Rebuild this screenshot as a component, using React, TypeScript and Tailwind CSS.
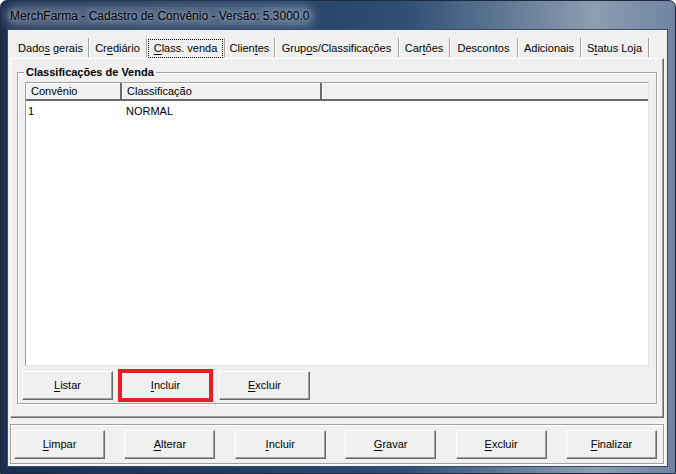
import React from "react"

const tabs = [
  { label: "Dados gerais", u: 4, w: 76 },
  { label: "Crediário", u: 2, w: 58 },
  { label: "Class. venda", u: 0, w: 78, active: true },
  { label: "Clientes", u: 5, w: 50 },
  { label: "Grupos/Classificações", u: 4, w: 124 },
  { label: "Cartões", u: 3, w: 51 },
  { label: "Descontos", u: -1, w: 68 },
  { label: "Adicionais", u: -1, w: 63 },
  { label: "Status Loja", u: 1, w: 68 },
]

const bottomButtons = [
  { label: "Limpar", u: 0 },
  { label: "Alterar", u: 0 },
  { label: "Incluir", u: 0 },
  { label: "Gravar", u: 0 },
  { label: "Excluir", u: 0 },
  { label: "Finalizar", u: 0 },
]

function Mnemonic({ text, u }: { text: string; u: number }) {
  if (u < 0) return <>{text}</>
  return (
    <>
      {text.slice(0, u)}
      <span className="underline underline-offset-[2px]">{text[u]}</span>
      {text.slice(u + 1)}
    </>
  )
}

function Button({ label, u, className = "" }: { label: string; u: number; className?: string }) {
  return (
    <button
      className={
        "h-[29px] w-[91px] bg-[#f0f0f0] text-black border border-t-white border-l-white border-r-[#696969] border-b-[#696969] shadow-[inset_-1px_-1px_0_#a0a0a0] " +
        className
      }
    >
      <Mnemonic text={label} u={u} />
    </button>
  )
}

export default function App() {
  return (
    <div className="w-[676px] h-[474px] flex flex-col rounded-t-[7px] border border-[#1b2a40] bg-[linear-gradient(90deg,#1a2f51_0%,#213d62_35%,#2f4f74_60%,#8e9db2_88%,#6f84a2_100%)] pl-[6px] pr-[7px] pb-[6px] font-['Liberation_Sans',Arial,sans-serif] text-[11px] text-black">
      {/* title bar */}
      <div className="h-[28px] flex items-center pl-[1px] pt-[1px]">
        <span className="text-[12px] text-black px-[2px] rounded-full bg-[rgba(200,212,228,0.28)] shadow-[0_0_10px_4px_rgba(200,212,228,0.28)] [text-shadow:0_0_5px_rgba(255,255,255,0.8)]">
          MerchFarma - Cadastro de Convênio - Versão: 5.3000.0
        </span>
      </div>

      {/* client area */}
      <div className="flex-1 flex flex-col bg-[#f0f0f0] border border-[#3a4e6c] pt-[7px] pl-[2px] pr-[3px]">
        {/* tab strip */}
        <div className="flex h-[21px] pl-[3px]">
          {tabs.map((t) => (
            <div
              key={t.label}
              style={{ width: t.w }}
              className="flex items-center justify-center pt-[2px] border-r border-r-[#a0a0a0] shadow-[1px_0_0_white] my-[1px]"
            >
              <span
                className={
                  "py-[2px] leading-[13px] " +
                  (t.active ? "px-[5px] outline outline-1 outline-dotted outline-black" : "px-[3px]")
                }
              >
                <Mnemonic text={t.label} u={t.u} />
              </span>
            </div>
          ))}
        </div>

        {/* tab page */}
        <div className="h-[360px] flex flex-col border border-t-white border-l-white border-r-[#696969] border-b-[#696969] shadow-[inset_-1px_-1px_0_#a0a0a0] pt-[7px] pl-[6px] pr-[6px]">
          <fieldset className="h-[338px] flex flex-col border border-[#a0a0a0] shadow-[inset_1px_1px_0_white,1px_1px_0_white] min-w-0">
            <legend className="ml-[6px] px-[2px] font-bold leading-[13px]">Classificações de Venda</legend>

            {/* list view */}
            <div className="mt-[3px] mx-[7px] h-[284px] flex flex-col bg-white border border-t-[#a0a0a0] border-l-[#a0a0a0] border-r-[#e3e3e3] border-b-[#e3e3e3]">
              <div className="flex h-[18px] bg-[#f0f0f0] border-b-2 border-b-[#696969] shadow-[inset_0_1px_0_white]">
                <div className="w-[96px] flex items-center pl-[5px] border-r-2 border-r-[#696969] shadow-[inset_1px_0_0_white]">
                  Convênio
                </div>
                <div className="w-[200px] flex items-center pl-[5px] border-r-2 border-r-[#696969] shadow-[inset_1px_0_0_white]">
                  Classificação
                </div>
                <div className="flex-1 shadow-[inset_1px_0_0_white]" />
              </div>
              <div className="flex h-[17px] items-center mt-[2px]">
                <div className="w-[96px] pl-[2px]">1</div>
                <div className="pl-[4px]">NORMAL</div>
              </div>
            </div>

            {/* group buttons */}
            <div className="flex items-center h-[33px] mt-[3px] pl-[4px]">
              <Button label="Listar" u={0} className="w-[90px]" />
              <div className="ml-[5px] h-[33px] w-[95px] border-4 border-[#ed1c24] bg-[#f0f0f0] flex items-center justify-center">
                <Mnemonic text="Incluir" u={0} />
              </div>
              <Button label="Excluir" u={0} className="ml-[6px] w-[90px]" />
            </div>
          </fieldset>
        </div>

        {/* bottom panel */}
        <div className="mt-[6px] h-[40px] flex items-center justify-between border border-[#a0a0a0] shadow-[inset_1px_1px_0_white,1px_1px_0_white] pl-[3px] pr-[6px]">
          {bottomButtons.map((b) => (
            <Button key={b.label} label={b.label} u={b.u} />
          ))}
        </div>
      </div>
    </div>
  )
}
